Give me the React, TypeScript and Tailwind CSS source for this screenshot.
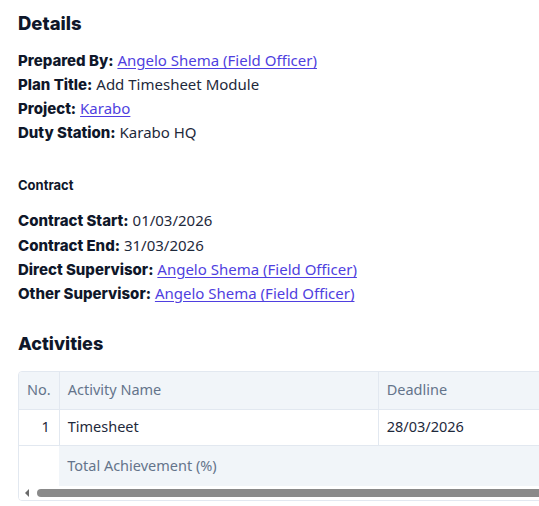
import React from 'react';

const body = { fontFamily: '"Noto Sans", "Open Sans", sans-serif' };
const strong = { fontFamily: 'Inter, "Noto Sans", sans-serif' };

function Row({ label, children }: { label: string; children: React.ReactNode }) {
  return (
    <div className="h-[24px] overflow-hidden whitespace-nowrap text-[15px] leading-[24px] text-[#1e293b]">
      <span className="font-extrabold text-[#0f172a]" style={strong}>{label}:</span>{' '}
      <span>{children}</span>
    </div>
  );
}

function Link({ children }: { children: React.ReactNode }) {
  return <a href="#" className="text-[#4f3fe0] underline underline-offset-2">{children}</a>;
}

export default function App() {
  return (
    <div className="w-[539px] h-[506px] overflow-hidden bg-white" style={body}>
      <div className="pl-[18px] pt-[11px]">
        <h2 className="text-[18.5px] font-extrabold leading-[24px] text-[#0f172a]" style={strong}>Details</h2>
        <div className="mt-[13px]">
          <Row label="Prepared By"><Link>Angelo Shema (Field Officer)</Link></Row>
          <Row label="Plan Title">Add Timesheet Module</Row>
          <Row label="Project"><Link>Karabo</Link></Row>
          <Row label="Duty Station">Karabo HQ</Row>
        </div>

        <h3 className="mt-[31px] text-[13px] font-bold leading-[20px] text-[#0f172a]" style={strong}>Contract</h3>
        <div className="mt-[13px]">
          <Row label="Contract Start">01/03/2026</Row>
          <div className="h-[1px]" />
          <Row label="Contract End">31/03/2026</Row>
          <Row label="Direct Supervisor"><Link>Angelo Shema (Field Officer)</Link></Row>
          <Row label="Other Supervisor"><Link>Angelo Shema (Field Officer)</Link></Row>
        </div>

        <h2 className="mt-[27px] text-[18px] font-extrabold leading-[24px] text-[#0f172a]" style={strong}>Activities</h2>

        <div className="mt-[15px] w-[620px] rounded-[4px] border border-[#e2e8f0] overflow-hidden">
          <table className="w-[700px] border-collapse text-[14.5px]">
            <thead>
              <tr className="bg-[#f1f5f9] text-[#64748b] h-[37px]">
                <th className="w-[40px] px-[8px] text-left font-normal border-r border-b border-[#e2e8f0]">No.</th>
                <th className="w-[319px] px-[8px] text-left font-normal border-r border-b border-[#e2e8f0]">Activity Name</th>
                <th className="px-[8px] text-left font-normal border-b border-[#e2e8f0]">Deadline</th>
              </tr>
            </thead>
            <tbody>
              <tr className="h-[36px] text-[#1e293b]">
                <td className="px-[9px] text-right border-r border-b border-[#e2e8f0]">1</td>
                <td className="px-[8px] border-r border-b border-[#e2e8f0]">Timesheet</td>
                <td className="px-[8px] border-b border-[#e2e8f0]">28/03/2026</td>
              </tr>
              <tr className="h-[41px]">
                <td />
                <td colSpan={2} className="px-[8px] bg-[#f1f5f9] text-[#64748b]">Total Achievement (%)</td>
              </tr>
            </tbody>
          </table>
          {/* horizontal scrollbar */}
          <div className="flex h-[14px] items-center bg-white">
            <div className="ml-[6px] h-0 w-0 border-y-[4px] border-r-[4px] border-y-transparent border-r-[#6b6b6b]" />
            <div className="ml-[8px] h-[8px] flex-1 rounded-full bg-[#8a8a8a]" />
          </div>
        </div>
      </div>
    </div>
  );
}
